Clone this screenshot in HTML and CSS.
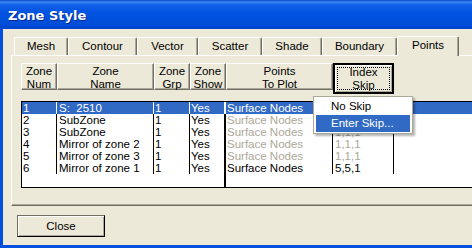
FILE: index.html
```html
<!DOCTYPE html>
<html lang="en">

<head>
    <meta charset="UTF-8">
    <title>Zone Style</title>
    <link rel="stylesheet" href="styles.css">
</head>

<body>
    <div class="window">
        <div class="titlebar"><span class="title">Zone Style</span></div>

        <div class="client">
            <div class="tabs">
                <div class="tab" style="width:54px">Mesh</div>
                <div class="tab" style="width:69px">Contour</div>
                <div class="tab" style="width:61px">Vector</div>
                <div class="tab" style="width:64px">Scatter</div>
                <div class="tab" style="width:60px">Shade</div>
                <div class="tab" style="width:75px">Boundary</div>
                <div class="tab active" style="width:62px">Points</div>
            </div>

            <div class="panel">
                <div class="header">
                    <div class="hcell c1">Zone<br>Num</div>
                    <div class="hcell c2">Zone<br>Name</div>
                    <div class="hcell c3">Zone<br>Grp</div>
                    <div class="hcell c4">Zone<br>Show</div>
                    <div class="hcell c5">Points<br>To Plot</div>
                    <div class="hcell c6 pressed">
                        <div class="focus"><span>Index</span><span>Skip</span></div>
                    </div>
                </div>

                <div class="list">
                    <div class="col c1">
                        <div class="cell sel">1</div>
                        <div class="cell">2</div>
                        <div class="cell">3</div>
                        <div class="cell">4</div>
                        <div class="cell">5</div>
                        <div class="cell">6</div>
                    </div>
                    <div class="col c2">
                        <div class="cell sel">S:&nbsp; 2510</div>
                        <div class="cell">SubZone</div>
                        <div class="cell">SubZone</div>
                        <div class="cell">Mirror of zone 2</div>
                        <div class="cell">Mirror of zone 3</div>
                        <div class="cell">Mirror of zone 1</div>
                    </div>
                    <div class="col c3">
                        <div class="cell sel">1</div>
                        <div class="cell">1</div>
                        <div class="cell">1</div>
                        <div class="cell">1</div>
                        <div class="cell">1</div>
                        <div class="cell">1</div>
                    </div>
                    <div class="col c4">
                        <div class="cell sel">Yes</div>
                        <div class="cell">Yes</div>
                        <div class="cell">Yes</div>
                        <div class="cell">Yes</div>
                        <div class="cell">Yes</div>
                        <div class="cell">Yes</div>
                        <div class="fill"></div>
                    </div>
                    <div class="col c5">
                        <div class="cell sel">Surface Nodes</div>
                        <div class="cell dim">Surface Nodes</div>
                        <div class="cell dim">Surface Nodes</div>
                        <div class="cell dim">Surface Nodes</div>
                        <div class="cell dim">Surface Nodes</div>
                        <div class="cell">Surface Nodes</div>
                    </div>
                    <div class="col c6">
                        <div class="cell sel">1,1,1</div>
                        <div class="cell dim">1,1,1</div>
                        <div class="cell dim">1,1,1</div>
                        <div class="cell dim">1,1,1</div>
                        <div class="cell dim">1,1,1</div>
                        <div class="cell">5,5,1</div>
                    </div>
                    <div class="col c7">
                        <div class="cell sel"></div>
                    </div>
                </div>
            </div>

            <div class="buttons">
                <button class="btn">Close</button>
            </div>
        </div>

        <div class="menu">
            <div class="item">No Skip</div>
            <div class="item hover">Enter Skip...</div>
        </div>
    </div>
</body>

</html>
```

FILE: styles.css
```css
body {
    margin: 0;
    padding: 0;
    overflow: hidden;
    font-family: "Liberation Sans", Arial, sans-serif;
    font-size: 11.5px;
    color: #000;
}

.window {
    position: relative;
    width: 472px;
    height: 248px;
    background-color: #0050e0;
    display: flex;
    flex-direction: column;
    overflow: hidden;
}

.titlebar {
    height: 29px;
    flex: none;
    background: linear-gradient(#0846c8 0, #3a86f2 2px, #0f5fe8 5px, #0052e0 14px, #004ed8 24px, #0042cc 29px);
}

.title {
    display: block;
    padding: 2px 0 0 8px;
    line-height: 27px;
    font-family: "DejaVu Sans", sans-serif;
    font-weight: bold;
    font-size: 13px;
    color: #fff;
    text-shadow: 1px 1px 0 #0a2a8a;
}

.client {
    flex: 1;
    margin: 0 0 3px 3px;
    padding: 7px 0 0 8px;
    background-color: #ece9d8;
    overflow: hidden;
}

/* tabs */
.tabs {
    display: flex;
    height: 19px;
    padding-left: 3px;
    align-items: flex-start;
}

.tab {
    flex: none;
    box-sizing: border-box;
    height: 18px;
    margin-top: 1px;
    line-height: 16px;
    text-align: center;
    background-color: #ece9d8;
    border-top: 1px solid #fff;
    border-left: 1px solid #fff;
    border-right: 1px solid #716f64;
    box-shadow: inset -1px 0 #aca899;
    border-radius: 2px 2px 0 0;
}

.tab.active {
    position: relative;
    z-index: 1;
    height: 20px;
    margin-top: 0;
    line-height: 17px;
}

/* panel */
.panel {
    box-sizing: border-box;
    width: 480px;
    height: 151px;
    padding: 7px 0 0 9px;
    border-top: 1px solid #fff;
    border-left: 1px solid #fff;
    border-bottom: 1px solid #716f64;
    box-shadow: inset 0 -1px #aca899;
}

.header {
    display: flex;
    align-items: flex-start;
    height: 27px;
}

.hcell {
    flex: none;
    box-sizing: border-box;
    height: 27px;
    padding-top: 1px;
    line-height: 12.5px;
    text-align: center;
    background-color: #ece9d8;
    border-top: 1px solid #fff;
    border-left: 1px solid #fff;
    border-right: 1px solid #716f64;
    border-bottom: 1px solid #716f64;
    box-shadow: inset -1px -1px #aca899;
}

.header .c1 { width: 36px; }
.header .c2 { width: 97px; }
.header .c3 { width: 36px; }
.header .c4 { width: 36px; }
.header .c5 { width: 107px; }
.header .c6 { width: 61px; }

.hcell.pressed {
    height: 31px;
    border: 2px solid #000;
    padding: 2px;
    box-shadow: inset 1px 1px #fff, inset -1px -1px #aca899;
}

.focus {
    display: flex;
    flex-direction: column;
    justify-content: center;
    box-sizing: border-box;
    height: 23px;
    line-height: 13px;
    border: 1px dotted #000;
}

/* list */
.list {
    display: flex;
    box-sizing: border-box;
    height: 87px;
    margin-top: 11px;
    border: 1px solid #000;
    border-right: none;
    background-color: #fff;
}

.col {
    display: flex;
    flex-direction: column;
    flex: none;
}

.cell {
    box-sizing: border-box;
    height: 12px;
    line-height: 12px;
    padding-left: 1px;
    white-space: nowrap;
    overflow: hidden;
    border-right: 1px solid #000;
}

.cell.sel {
    background-color: #316ac5;
    color: #fff;
    border-right-color: #fff;
}

.cell.dim {
    color: #aca899;
}

.list .c1 { width: 35px; }
.list .c2 { width: 97px; }
.list .c2 .cell { padding-left: 2px; }
.list .c3 { width: 36px; }
.list .c4 { width: 36px; }
.list .c4 .cell { border-right-width: 2px; }
.list .c5 { width: 107px; }
.list .c6 { width: 61px; }
.list .c6 .cell { padding-left: 2px; }

.list .c7 {
    flex: 1;
}

.list .c7 .cell {
    border-right: none;
}

.fill {
    flex: 1;
    border-right: 2px solid #000;
}

/* bottom buttons */
.buttons {
    padding: 9px 0 0 6px;
}

.btn {
    width: 88px;
    height: 22px;
    padding: 0;
    font-family: "Liberation Sans", Arial, sans-serif;
    font-size: 11.5px;
    color: #000;
    background-color: #ece9d8;
    border: 1px solid #716f64;
    border-right-color: #000;
    border-bottom-color: #000;
    box-shadow: inset 1px 1px #fff, inset -1px -1px #aca899;
}

/* popup menu */
.menu {
    position: absolute;
    left: 313px;
    top: 96px;
    box-sizing: border-box;
    width: 100px;
    padding: 1px 2px;
    background-color: #fff;
    border: 1px solid #aca899;
    box-shadow: 2px 2px 2px rgba(0, 0, 0, 0.3);
}

.item {
    height: 17px;
    line-height: 17px;
    padding-left: 15px;
    white-space: nowrap;
}

.item.hover {
    background-color: #316ac5;
    color: #fff;
}
```
